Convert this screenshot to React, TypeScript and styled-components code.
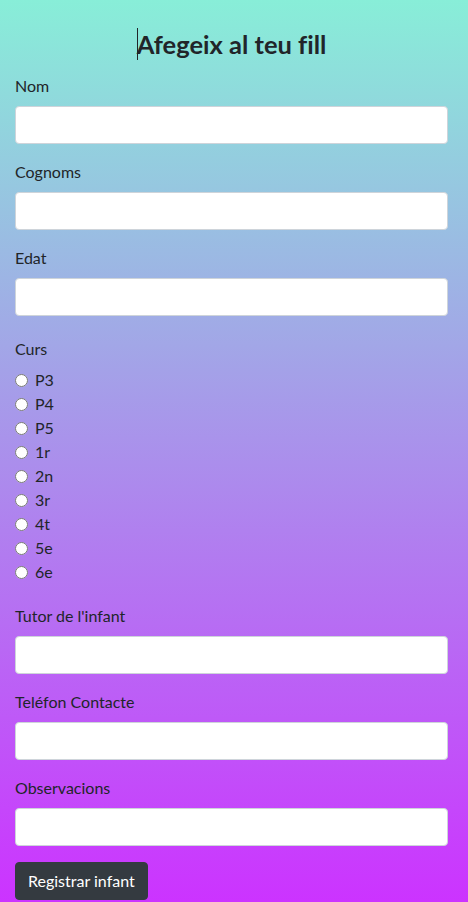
import React from "react";
import styled, { createGlobalStyle } from "styled-components";

const GlobalStyle = createGlobalStyle`
  html, body { margin: 0; padding: 0; }
  body {
    min-height: 100vh;
    background: linear-gradient(180deg, #88eed8 0%, #cc33ff 100%);
    font-family: Lato, "Noto Sans", Arial, sans-serif;
    font-size: 16px;
    line-height: 1.5;
    color: #212529;
  }
  * { box-sizing: border-box; }
`;

const Page = styled.div`
  min-height: 100vh;
  padding: 28px 20px 0 15px;
`;

const Title = styled.h4`
  margin: 0 0 14px;
  text-align: center;
  font-size: 25.5px;
  font-weight: 700;
  line-height: 32px;
  font-variant-ligatures: none;
  color: #212529;
`;

const Caret = styled.span`
  display: inline-block;
  width: 1px;
  height: 32px;
  background: #212529;
  vertical-align: top;
  margin-right: -1px;
`;

const Form = styled.form`
  display: flex;
  flex-direction: column;
`;

const Group = styled.div<{ $gap?: number }>`
  display: flex;
  flex-direction: column;
  margin-bottom: ${(p) => p.$gap ?? 16}px;
`;

const Label = styled.label<{ $mb?: number }>`
  display: block;
  margin-bottom: ${(p) => p.$mb ?? 8}px;
  line-height: 24px;
`;

const Input = styled.input`
  display: block;
  width: 100%;
  height: 38px;
  padding: 6px 12px;
  font: inherit;
  background: #fff;
  border: 1px solid #ced4da;
  border-radius: 4px;
  outline: none;
`;

const RadioList = styled.div`
  display: flex;
  flex-direction: column;
`;

const RadioRow = styled.label`
  display: flex;
  align-items: center;
  height: 24px;
  line-height: 24px;
`;

const Radio = styled.input`
  width: 13px;
  height: 13px;
  margin: 0 7px 0 0;
`;

const Button = styled.button`
  align-self: flex-start;
  padding: 6px 12px;
  font: inherit;
  line-height: 24px;
  color: #fff;
  background: #343a40;
  border: 1px solid #343a40;
  border-radius: 4px;
`;

const courses = ["P3", "P4", "P5", "1r", "2n", "3r", "4t", "5e", "6e"];

export default function App() {
  return (
    <>
      <GlobalStyle />
      <Page>
        <Title>
          <Caret />
          Afegeix al teu fill
        </Title>
        <Form onSubmit={(e) => e.preventDefault()}>
          <Group>
            <Label>Nom</Label>
            <Input type="text" />
          </Group>
          <Group>
            <Label>Cognoms</Label>
            <Input type="text" />
          </Group>
          <Group $gap={21}>
            <Label>Edat</Label>
            <Input type="text" />
          </Group>
          <Group $gap={20}>
            <Label $mb={7}>Curs</Label>
            <RadioList>
              {courses.map((c) => (
                <RadioRow key={c}>
                  <Radio type="radio" name="curs" value={c} />
                  {c}
                </RadioRow>
              ))}
            </RadioList>
          </Group>
          <Group>
            <Label>Tutor de l'infant</Label>
            <Input type="text" />
          </Group>
          <Group>
            <Label>Teléfon Contacte</Label>
            <Input type="text" />
          </Group>
          <Group>
            <Label>Observacions</Label>
            <Input type="text" />
          </Group>
          <Button type="submit">Registrar infant</Button>
        </Form>
      </Page>
    </>
  );
}
